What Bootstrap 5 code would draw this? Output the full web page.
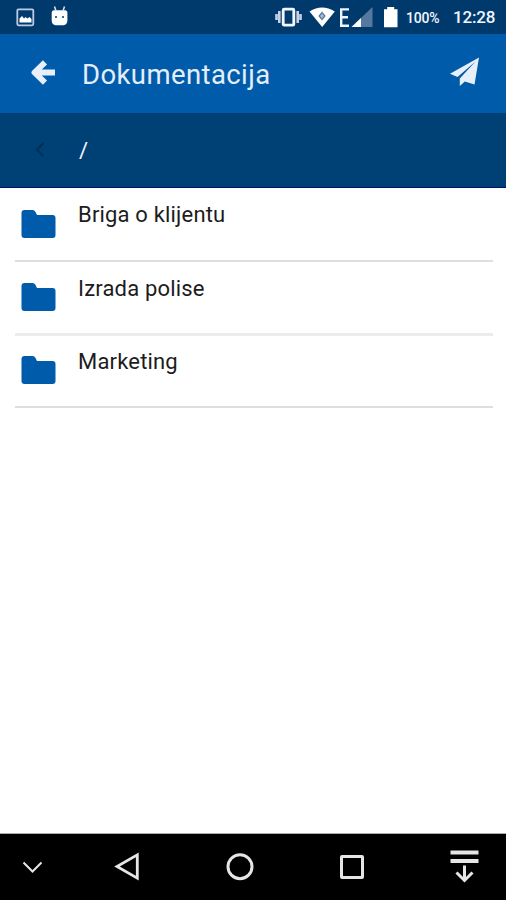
<!DOCTYPE html>
<html lang="hr">
<head>
<meta charset="utf-8">
<meta name="viewport" content="width=device-width, initial-scale=1">
<title>Dokumentacija</title>
<link href="https://cdn.jsdelivr.net/npm/bootstrap@5.3.0/dist/css/bootstrap.min.css" rel="stylesheet">
<style>
body { font-family: Roboto, "Liberation Sans", sans-serif; background: #fff; color: #212121; }
svg { display: block; flex: none; }
.status { height: 34px; background: #003a6c; color: #f4f7ff; padding: 0 10px 0 15px; }
.battery-text { font-size: 14px; font-weight: 500; width: 35px; margin: 3px 0 0 8px; letter-spacing: -.2px; white-space: nowrap; }
.clock { font-size: 17px; font-weight: 500; width: 43px; margin: 2px 0 0 12px; letter-spacing: -.15px; white-space: nowrap; }
.appbar { height: 79px; background: #005baa; color: #e4eefb; padding: 0 26px 0 30px; }
.appbar h1 { font-size: 27.5px; font-weight: 400; line-height: 36px; margin: 2px 0 0 25px; letter-spacing: .4px; }
.pathbar { height: 75px; background: #004175; color: #f2f4ff; border-bottom: 1px solid #00106a; padding: 0 34px; }
.path-text { font-size: 22px; margin: 0 0 0 33px; }
.files { padding: 0 13px 0 15px; }
.file-row { height: 73px; border-bottom: 2px solid #dedede; padding: 0 0 0 6px; }
.file-row:first-child { height: 74px; }
.file-row:nth-child(2) { height: 74px; border-bottom: 3px solid #ececec; }
.file-row:nth-child(3) { height: 72px; }
.file-row svg { margin-top: 20px; }
.file-row:first-child svg { margin-top: 21px; }
.file-row:nth-child(3) svg { margin-top: 19px; }
.file-name { font-size: 22px; line-height: 28px; letter-spacing: .18px; margin: 13px 0 0 22px; color: #1c1c1c; }
.file-row:nth-child(2) .file-name { margin-top: 13px; }
.file-row:nth-child(3) .file-name { margin-top: 12px; }
.softkeys { height: 67px; background: #000; border-top: 1px solid #aaa; padding: 0 26px 0 22px; gap: 85.3px; }
.softkeys svg { fill: none; stroke: #e6e6e6; }
.softkeys .hide-key { margin-right: -14px; }
</style>
<script src="https://cdn.jsdelivr.net/npm/bootstrap@5.3.0/dist/js/bootstrap.bundle.min.js" defer></script>
</head>
<body>
<div class="d-flex flex-column vh-100 overflow-hidden">
  <div class="status d-flex align-items-center flex-shrink-0">
    <svg width="56" height="34" viewBox="15 0 56 34">
      <rect x="17.3" y="9.3" width="16" height="16" rx="1.2" fill="none" stroke="#bccbe1" stroke-width="1.8"/>
      <path d="M19.500 22.500V18.500l2.500-2.500 2 2.500 1.500-1.500 2 1.500 2-1.500 2 2v3.500z" fill="#fff"/>
      <path d="M51.700 12.500q0-2 2-2.300h11.700q2 .3 2 2.300v8q0 4-4 4.700h-7.700q-4-.7-4-4.700z" fill="#fff"/>
      <path d="M54.500 6.500l1.500 4.500m8.500-4.500L63 11" stroke="#d9e3f5" stroke-width="1.500"/>
      <circle cx="56" cy="17" r="1" fill="#003a6c"/><circle cx="63" cy="17" r="1" fill="#003a6c"/>
    </svg>
    <svg class="ms-auto" width="124" height="34" viewBox="274 0 124 34">
      <path d="M276.500 14v6M279.300 11v12M297.700 11v12M300.500 14v6" stroke="#c5d2e6" stroke-width="2.600"/>
      <rect x="283.200" y="9.200" width="10.600" height="16" rx="1" fill="none" stroke="#f2f6ff" stroke-width="2.800"/>
      <path d="M309.500 11.500Q322 3.500 334.800 11.500L322.200 27z" fill="#fff"/>
      <path d="M322 11.500l3.700 4.500-3.700 4.500-3.700-4.500z" fill="#557799"/><path d="M322 13.500v5M320 16h4" stroke="#dce5ef" stroke-width=".8"/>
      <path d="M349 9.400h-7.800v16.400h7.800M341 17.300h7" fill="none" stroke="#eef3ff" stroke-width="2.400"/>
      <path d="M372.500 7v20h-21z" fill="#55789f"/><path d="M361 18v9h-9.500z" fill="#fff"/>
      <path d="M384 9.300h3.200V7h7v2.300h3.300v18H384z" fill="#fff"/>
    </svg>
    <span class="battery-text">100%</span>
    <span class="clock">12:28</span>
  </div>

  <header class="appbar d-flex align-items-center flex-shrink-0">
    <svg width="27" height="30" viewBox="30 58 27 30" fill="none" stroke="#e7effb" stroke-width="5.900" stroke-linejoin="round">
      <path d="M45 61.300L34.500 71.500 45 81.700M35 71.500H55"/>
    </svg>
    <h1 class="mb-0">Dokumentacija</h1>
    <svg class="ms-auto" width="30" height="34" viewBox="450 56 30 34" fill="#e7effb">
      <path d="M479 56.500L450 72.800l7.500 3.300L475.500 60.500 459.800 77.600v7.400l5-4.500 9.700 3z"/>
    </svg>
  </header>

  <nav class="pathbar d-flex align-items-center flex-shrink-0">
    <svg width="12" height="18" viewBox="34 140 12 18" fill="none" stroke="#003054" stroke-width="2">
      <path d="M43.500 142l-6.500 6.700 6.500 6.700"/>
    </svg>
    <span class="path-text">/</span>
  </nav>

  <main class="files flex-grow-1">
    <div class="file-row d-flex align-items-start">
      <svg width="35" height="30" viewBox="0 0 35 30" fill="#005baa"><path d="M3.500 1h8q2 0 3 2l1.500 3h15.500q3 0 3 3v17q0 3-3 3h-28q-3 0-3-3V4q0-3 3-3z"/></svg>
      <div class="file-name">Briga o klijentu</div>
    </div>
    <div class="file-row d-flex align-items-start">
      <svg width="35" height="30" viewBox="0 0 35 30" fill="#005baa"><path d="M3.500 1h8q2 0 3 2l1.500 3h15.500q3 0 3 3v17q0 3-3 3h-28q-3 0-3-3V4q0-3 3-3z"/></svg>
      <div class="file-name">Izrada polise</div>
    </div>
    <div class="file-row d-flex align-items-start">
      <svg width="35" height="30" viewBox="0 0 35 30" fill="#005baa"><path d="M3.500 1h8q2 0 3 2l1.500 3h15.500q3 0 3 3v17q0 3-3 3h-28q-3 0-3-3V4q0-3 3-3z"/></svg>
      <div class="file-name">Marketing</div>
    </div>
  </main>

  <footer class="softkeys d-flex align-items-center flex-shrink-0">
    <svg class="hide-key" width="21" height="34" viewBox="22 850 21 34" stroke-width="2"><path d="M23.500 862.500l9 9 9-9"/></svg>
    <svg width="26" height="34" viewBox="114 850 26 34" stroke-width="2.800"><path d="M137.300 854.800v23.400L117 866.500z"/></svg>
    <svg width="28" height="34" viewBox="225.500 850 28 34" stroke-width="3"><circle cx="239.500" cy="866.700" r="12"/></svg>
    <svg width="26" height="34" viewBox="339 850 26 34" stroke-width="3"><rect x="341.500" y="856.500" width="21" height="21" rx=".5"/></svg>
    <svg width="29" height="34" viewBox="450 850 29 34"><path d="M450.500 852.500h28M450.500 861h28" stroke-width="4.200"/><path d="M464.500 865.500v15M456.500 872.500l8 8 8-8" stroke-width="3"/></svg>
  </footer>
</div>
</body>
</html>
